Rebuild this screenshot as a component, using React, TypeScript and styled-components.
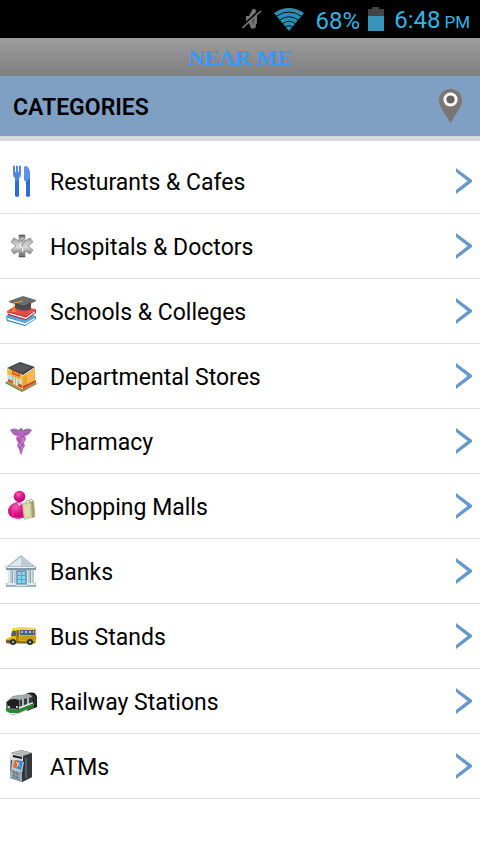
import React from "react";
import styled, { createGlobalStyle } from "styled-components";

const GlobalStyle = createGlobalStyle`
  * { box-sizing: border-box; }
  body {
    margin: 0;
    background: #fff;
    color: #000;
    font-family: Roboto, "Noto Sans", sans-serif;
  }
`;

const Screen = styled.div`
  display: flex;
  flex-direction: column;
  min-height: 100vh;
`;

const StatusBar = styled.div`
  display: flex;
  align-items: center;
  justify-content: flex-end;
  height: 38px;
  padding: 0 10px;
  gap: 8px;
  background: #000;
  color: #33b5e5;
  font-size: 24px;
  line-height: 32px;
`;

const StatusIcons = styled.div`
  display: flex;
  align-items: center;
  gap: 12px;
`;

const Clock = styled.time`
  display: flex;
  align-items: baseline;
  gap: 4px;
  margin-left: 2px;
  padding-top: 4px;
`;

const Level = styled.span`
  padding-top: 4px;
`;

const Meridiem = styled.span`
  font-size: 17px;
`;

const TitleBar = styled.header`
  display: flex;
  align-items: center;
  justify-content: center;
  height: 38px;
  background: linear-gradient(#9d9d9d, #7f7f7f);
`;

const Title = styled.h1`
  margin: 0;
  padding-top: 2px;
  color: #3399ff;
  font: bold 22px/36px "Liberation Serif", serif;
`;

const SectionBar = styled.div`
  display: flex;
  align-items: center;
  justify-content: space-between;
  height: 65px;
  padding: 0 18px 0 13px;
  background: #7f9fc3;
  border-bottom: 5px solid #d7d8d9;
`;

const SectionTitle = styled.h2`
  margin: 0;
  padding-top: 4px;
  font-size: 23px;
  font-weight: 600;
  line-height: 28px;
`;

const LocateButton = styled.button`
  display: flex;
  padding: 0;
  border: 0;
  background: none;
  cursor: pointer;
`;

const CategoryList = styled.ul`
  margin: 0;
  padding: 8px 0 0;
  list-style: none;
`;

const CategoryItem = styled.li`
  border-bottom: 1px solid #dcdcdc;
`;

const CategoryButton = styled.button`
  display: grid;
  grid-template-columns: 32px 1fr 16px;
  align-items: center;
  column-gap: 13px;
  width: 100%;
  height: 64px;
  padding: 0 8px 0 5px;
  border: 0;
  background: none;
  color: inherit;
  font: inherit;
  text-align: left;
  cursor: pointer;
`;

const CategoryName = styled.span`
  padding-top: 4px;
  font-size: 23px;
  line-height: 28px;
`;

const Icon = styled.svg`
  display: block;
  flex: none;
`;

const Glyph = ({ children }: { children: React.ReactNode }) => (
  <Icon width="32" height="32" viewBox="0 0 32 32" aria-hidden="true">
    {children}
  </Icon>
);

const MuteIcon = () => (
  <Icon width="20" height="22" viewBox="0 0 20 22" aria-label="Muted">
    <path d="M4 8H7L10 2Q13 -1 14 3Q13 5 15 7V15Q13 17 14 19Q11 22 9 20L7 15H4Z" fill="#777" />
    <path d="M11 5Q14 11 11 17Q9 11 11 5Z" fill="#4a4a4a" />
    <path d="M0 18L18 2" stroke="#000" strokeWidth="1.6" />
    <path d="M0.5 20L19 3" stroke="#777" strokeWidth="1.6" />
  </Icon>
);

const WifiIcon = () => (
  <Icon width="30" height="23" viewBox="0 0 30 23" aria-label="Wi-Fi">
    <path d="M0 5Q15 -5 30 5L15 23Z" fill="#2a8fb8" />
    <path
      d="M2 8.5Q15 -0.5 28 8.5M5 12.5Q15 5 25 12.5M8 16Q15 10.5 22 16M11 19.5Q15 16 19 19.5"
      fill="none"
      stroke="#000"
      strokeWidth="0.9"
    />
  </Icon>
);

const BatteryIcon = () => (
  <Icon width="16" height="24" viewBox="0 0 16 24" aria-label="Battery">
    <path d="M0 2H4V0H11V2H16V9H0Z" fill="#444" />
    <path d="M0 9H16V24H0Z" fill="#3795bb" />
  </Icon>
);

const PinIcon = () => (
  <Icon width="23" height="34" viewBox="0 0 23 34" aria-hidden="true">
    <path d="M11.5 0C5 0 0 5 0 11.5C0 18 6 24 11.5 34C17 24 23 18 23 11.5C23 5 18 0 11.5 0Z" fill="#7b7674" />
    <circle cx="11.5" cy="10.5" r="5.6" fill="#686361" stroke="#fff" strokeWidth="3" />
  </Icon>
);

const Chevron = () => (
  <Icon width="16" height="26" viewBox="0 0 16 26" aria-hidden="true">
    <path d="M0 0L16 12V14L0 26V22L11.5 13L0 4Z" fill="#6699cc" />
  </Icon>
);

const Cutlery = () => (
  <Glyph>
    <path d="M8 1Q9 0 10 1V7H11V1Q12 0 13 1V7H14V1Q15 0 16 1V9Q16 12 14 13V31Q12 32.5 10 31V13Q8 12 8 9Z" fill="#4e86e2" />
    <path d="M10 16H14V31Q12 32.5 10 31Z" fill="#2f6ad6" />
    <path d="M20 1Q25 1 25 9V31Q22.5 32.5 21 31V17L19 15V3Q19 1 20 1Z" fill="#5b92e8" />
    <path d="M21 17L25 13V31Q22.5 32.5 21 31Z" fill="#2f6ad6" />
  </Glyph>
);

const MedicalStar = () => (
  <Glyph>
    <defs>
      <linearGradient id="steel" x1="0" y1="0" x2="0" y2="1">
        <stop offset="0" stopColor="#777" />
        <stop offset="0.35" stopColor="#c4c4c4" />
        <stop offset="0.55" stopColor="#dcdcdc" />
        <stop offset="0.75" stopColor="#a0a0a0" />
        <stop offset="1" stopColor="#666" />
      </linearGradient>
    </defs>
    <path
      d="M14 5H20V11L25 8L28 12L23 16L28 20L25 24L20 21V27H14V21L9 24L6 20L11 16L6 12L9 8L14 11Z"
      fill="url(#steel)"
      stroke="#8a8a8a"
      strokeWidth="0.8"
    />
    <path d="M14 5.5H20M14 26.5H20" stroke="#555" strokeWidth="1.2" />
    <path d="M17 7V25" stroke="#777" strokeWidth="0.9" />
    <path d="M16 9Q20 8 19 12Q14 14 16 17Q19 18 17 22" fill="none" stroke="#fff" strokeWidth="1.1" />
    <path d="M18 9Q21 12 17 14" fill="none" stroke="#555" strokeWidth="0.8" />
  </Glyph>
);

const Graduation = () => (
  <Glyph>
    <path d="M1 21L20 27L31 21V24L20 31L2 26Z" fill="#2584c4" />
    <path d="M2 22.5L20 28L30 22.5V24L20 30L3 25Z" fill="#eef4fa" />
    <path d="M1 21L10 16L31 21L20 27Z" fill="#46a3db" />
    <path d="M2 16L21 21L31 14V18L21 25L3 20Z" fill="#c92525" />
    <path d="M3 17.5L21 22.5L30 16V17.5L21 24L4 19Z" fill="#fff" />
    <path d="M2 16L10 11L31 14L21 21Z" fill="#e94a44" />
    <path d="M10 8L26 8V14Q18 18 10 13Z" fill="#4c4c4c" />
    <path d="M4 6L18 1L31 5L19 11Z" fill="#6c6c6c" />
    <path d="M4 6L19 11L31 5V6L19 12L4 7Z" fill="#444" />
    <path d="M18 6L9 8V15" fill="none" stroke="#e9a13c" strokeWidth="1" />
    <path d="M8 13H10L11 17H7Z" fill="#e98b25" />
  </Glyph>
);

const Store = () => (
  <Glyph>
    <path d="M0 23L17 32L32 24L30 22L17 29L3 21Z" fill="#4e8e32" />
    <path d="M2 21L17 29L31 22V24L17 31L2 23Z" fill="#c98b62" />
    <path d="M2 9L18 16V29L3 21Z" fill="#f5b531" />
    <path d="M18 16L30 8V22L18 29Z" fill="#f2a02c" />
    <path d="M22 14L30 9V22L22 27Z" fill="#f9b64e" />
    <path d="M2 8L15 2L30 7L18 15Z" fill="#3c4044" />
    <path d="M5 8L15 3.5L27 7L18 12.5Z" fill="#55595d" />
    <path d="M2 8L18 15V18L2 11Z" fill="#f7c440" />
    <path d="M7 10L15 13V17L7 14Z" fill="#dc4b25" />
    <path d="M8 12L14 14.5" stroke="#ffc53d" strokeWidth="1" />
    <path d="M3 14L17 20V27L3 20Z" fill="#bfdfe8" />
    <path d="M3 19L17 25V28L3 21Z" fill="#d4482e" />
    <path d="M8 16L13 18V27L8 24Z" fill="#dbeedd" stroke="#be9e35" strokeWidth="0.8" />
    <path d="M10.5 17V25" stroke="#bd9d3c" strokeWidth="0.7" />
    <path d="M18 26L31 20V22L18 29Z" fill="#cf4931" />
  </Glyph>
);

const Caduceus = () => (
  <Glyph>
    <path d="M5 5Q9 2 14 5L16 3L18 5Q23 2 27 5L25 8Q23 11 20 11L21 14L19 18L20 21L18 24L17 28L16 30L15 28L14 24L12 21L13 18L11 14L12 11Q9 11 7 8Z" fill="#b565bd" />
    <path d="M6 5.5Q12 3.5 14 7M26 5.5Q20 3.5 18 7" fill="none" stroke="#8d7390" strokeWidth="1.2" />
    <path d="M9 8L13 9M23 8L19 9" stroke="#9c5aa4" strokeWidth="1" />
    <path d="M13 11Q20 13 18 16T14 20Q19 22 16 25" fill="none" stroke="#d690de" strokeWidth="1" />
    <path d="M19 11Q12 13 14 16T18 20Q13 22 16 25" fill="none" stroke="#a04ca9" strokeWidth="1" />
    <circle cx="16" cy="4.5" r="1.3" fill="#777" />
  </Glyph>
);

const Shopper = () => (
  <Glyph>
    <defs>
      <radialGradient id="magenta" cx="0.4" cy="0.3" r="0.8">
        <stop offset="0" stopColor="#ef62ab" />
        <stop offset="0.45" stopColor="#dc188b" />
        <stop offset="1" stopColor="#a80062" />
      </radialGradient>
    </defs>
    <path d="M3 20Q4 14 12 12Q20 12 22 18V26Q15 31 7 27Q3 26 3 20Z" fill="url(#magenta)" />
    <path d="M7 19Q9 22 8 26M7 27Q13 29 18 27" fill="none" stroke="#ff2bb0" strokeWidth="1.3" />
    <circle cx="14.5" cy="6.5" r="5.8" fill="url(#magenta)" />
    <path d="M12 13L14 16L18 13" fill="#f8bada" />
    <path d="M17 13L29 11L30 27L19 30Z" fill="#cfcc98" />
    <path d="M26 11.5L29 11L30 27L27 28Z" fill="#a3a16c" />
    <path d="M19 14L25 13V26L20 28Z" fill="#dfdcb0" />
    <path d="M21 15Q20 10 23 10T25 14M24 13Q24 9 26 9T28 13" fill="none" stroke="#aaa990" strokeWidth="1" />
  </Glyph>
);

const Bank = () => (
  <Glyph>
    <path d="M1 12L16 0L31 12V14H1Z" fill="#a9bdc5" />
    <path d="M4 11L16 2L28 11Z" fill="#dfe9ed" />
    <path d="M16 1V11H29Z" fill="#bccdd3" />
    <path d="M1 12H31V15H1Z" fill="#7f98a4" />
    <path d="M2 12H30V13H2Z" fill="#eff5f6" />
    <path d="M3 15H29V29H3Z" fill="#8ba5b0" />
    <path d="M3 15H7V29H3ZM8 15H11V29H8ZM22 15H25V29H22ZM26 15H29V29H26Z" fill="#dce7eb" />
    <path d="M6 15V29M10 15V29M24 15V29M28 15V29" stroke="#9bafb8" strokeWidth="1" />
    <path d="M12 16H21V29H12Z" fill="#4ba9cc" />
    <path d="M13 17H16V20H13ZM17 17H20V20H17ZM13 21H16V24H13ZM17 21H20V24H17ZM13 25H16V28H13ZM17 25H20V28H17Z" fill="#8cd4ec" />
    <path d="M1 28H11V29H22V28H31V32H1Z" fill="#9eb2bb" />
    <path d="M2 28H11V30H2ZM22 28H30V30H22ZM11 30H22V31H11Z" fill="#e0e9ed" />
  </Glyph>
);

const Bus = () => (
  <Glyph>
    <path d="M8 8Q18 7 30 8Q32 9 31 22L29 24H3Q0 23 1 19L6 17Z" fill="#e0b31c" />
    <path d="M8 8Q19 7 30 8L29 10H9Z" fill="#f0d458" />
    <path d="M7 11H11V16H6ZM15 10H30V15H15Z" fill="#52606b" />
    <path d="M16 11H18V13H16ZM20 11H22V13H20ZM24 11H26V13H24ZM28 11H29V13H28Z" fill="#a4c4d6" />
    <path d="M11 10H14V22H11Z" fill="#b0800e" />
    <path d="M12 11H14V16H12Z" fill="#436f98" />
    <path d="M15 17H31M15 19H31" stroke="#9d7815" strokeWidth="0.8" />
    <path d="M1 20H6V23H1Z" fill="#706745" />
    <path d="M2 22H30" stroke="#59551f" strokeWidth="1.3" />
    <circle cx="8" cy="22" r="3" fill="#292929" />
    <circle cx="25" cy="22" r="3" fill="#292929" />
    <circle cx="8" cy="22" r="1.2" fill="#aaa" />
    <circle cx="25" cy="22" r="1.2" fill="#aaa" />
  </Glyph>
);

const Train = () => (
  <Glyph>
    <path d="M21 9Q30 5 32 12V22L22 26Z" fill="#171717" />
    <path d="M26 10Q30 10 30 15V20" fill="none" stroke="#555" strokeWidth="0.8" />
    <path d="M1 17L8 11L24 9Q28 10 28 14V21L14 27L4 26L1 24Z" fill="#777d7e" />
    <path d="M4 14L9 11L24 9L27 12L14 15Z" fill="#a4abab" />
    <path d="M2 17Q7 12 14 15V24L3 23Z" fill="#1f1f1f" />
    <path d="M15 15L28 12V17L15 22Z" fill="#343b3c" />
    <path d="M18 14V22M23 13V19" stroke="#dce1df" strokeWidth="1.5" />
    <path d="M14 22L28 17V19L14 25Z" fill="#e4eae5" />
    <path d="M1 23Q7 26 14 24L29 18V21L14 28L5 28L1 26Z" fill="#27872e" />
    <circle cx="4" cy="22" r="1" fill="#fff" />
    <circle cx="12" cy="22" r="1" fill="#fff" />
    <path d="M3 27L7 30L14 28L29 22" fill="none" stroke="#999" strokeWidth="0.7" />
  </Glyph>
);

const CashMachine = () => (
  <Glyph>
    <path d="M6 3L16 0L27 3V27L17 32L5 28Z" fill="#282b30" />
    <path d="M6 3L16 0L27 3L18 6Z" fill="#b6babb" />
    <path d="M6 3L18 6V13L6 10Z" fill="#d9dcdd" />
    <path d="M8 6L17 8" stroke="#191919" strokeWidth="2" />
    <path d="M7 10L19 12L17 23L6 20Z" fill="#bcc6ca" />
    <path d="M10 10L18 11L16 20L8 17Z" fill="#2a8ce1" />
    <path d="M10 10L14 11L12 18L8 17Z" fill="#f16633" />
    <path d="M11 12L15 16M14 12L12 17" stroke="#f7d5a5" strokeWidth="1" />
    <path d="M5 20L17 23V32L5 28Z" fill="#a1b0b8" />
    <path d="M7 22L15 25M7 25L15 28M7 27L15 30M9 21V28M12 22V29" stroke="#566b78" strokeWidth="0.8" />
    <path d="M18 7L27 4V27L17 32L18 23L20 12Z" fill="#35383d" />
    <path d="M21 8V28" stroke="#626870" strokeWidth="1.5" />
  </Glyph>
);

const categories = [
  { name: "Resturants & Cafes", Picture: Cutlery },
  { name: "Hospitals & Doctors", Picture: MedicalStar },
  { name: "Schools & Colleges", Picture: Graduation },
  { name: "Departmental Stores", Picture: Store },
  { name: "Pharmacy", Picture: Caduceus },
  { name: "Shopping Malls", Picture: Shopper },
  { name: "Banks", Picture: Bank },
  { name: "Bus Stands", Picture: Bus },
  { name: "Railway Stations", Picture: Train },
  { name: "ATMs", Picture: CashMachine },
];

export default function App() {
  return (
    <>
      <GlobalStyle />
      <Screen>
        <StatusBar>
          <StatusIcons>
            <MuteIcon />
            <WifiIcon />
            <Level>68%</Level>
          </StatusIcons>
          <BatteryIcon />
          <Clock>
            6:48 <Meridiem>PM</Meridiem>
          </Clock>
        </StatusBar>
        <TitleBar>
          <Title>NEAR ME</Title>
        </TitleBar>
        <main>
          <SectionBar>
            <SectionTitle>CATEGORIES</SectionTitle>
            <LocateButton type="button" aria-label="Show my location">
              <PinIcon />
            </LocateButton>
          </SectionBar>
          <CategoryList>
            {categories.map(({ name, Picture }) => (
              <CategoryItem key={name}>
                <CategoryButton type="button">
                  <Picture />
                  <CategoryName>{name}</CategoryName>
                  <Chevron />
                </CategoryButton>
              </CategoryItem>
            ))}
          </CategoryList>
        </main>
      </Screen>
    </>
  );
}
